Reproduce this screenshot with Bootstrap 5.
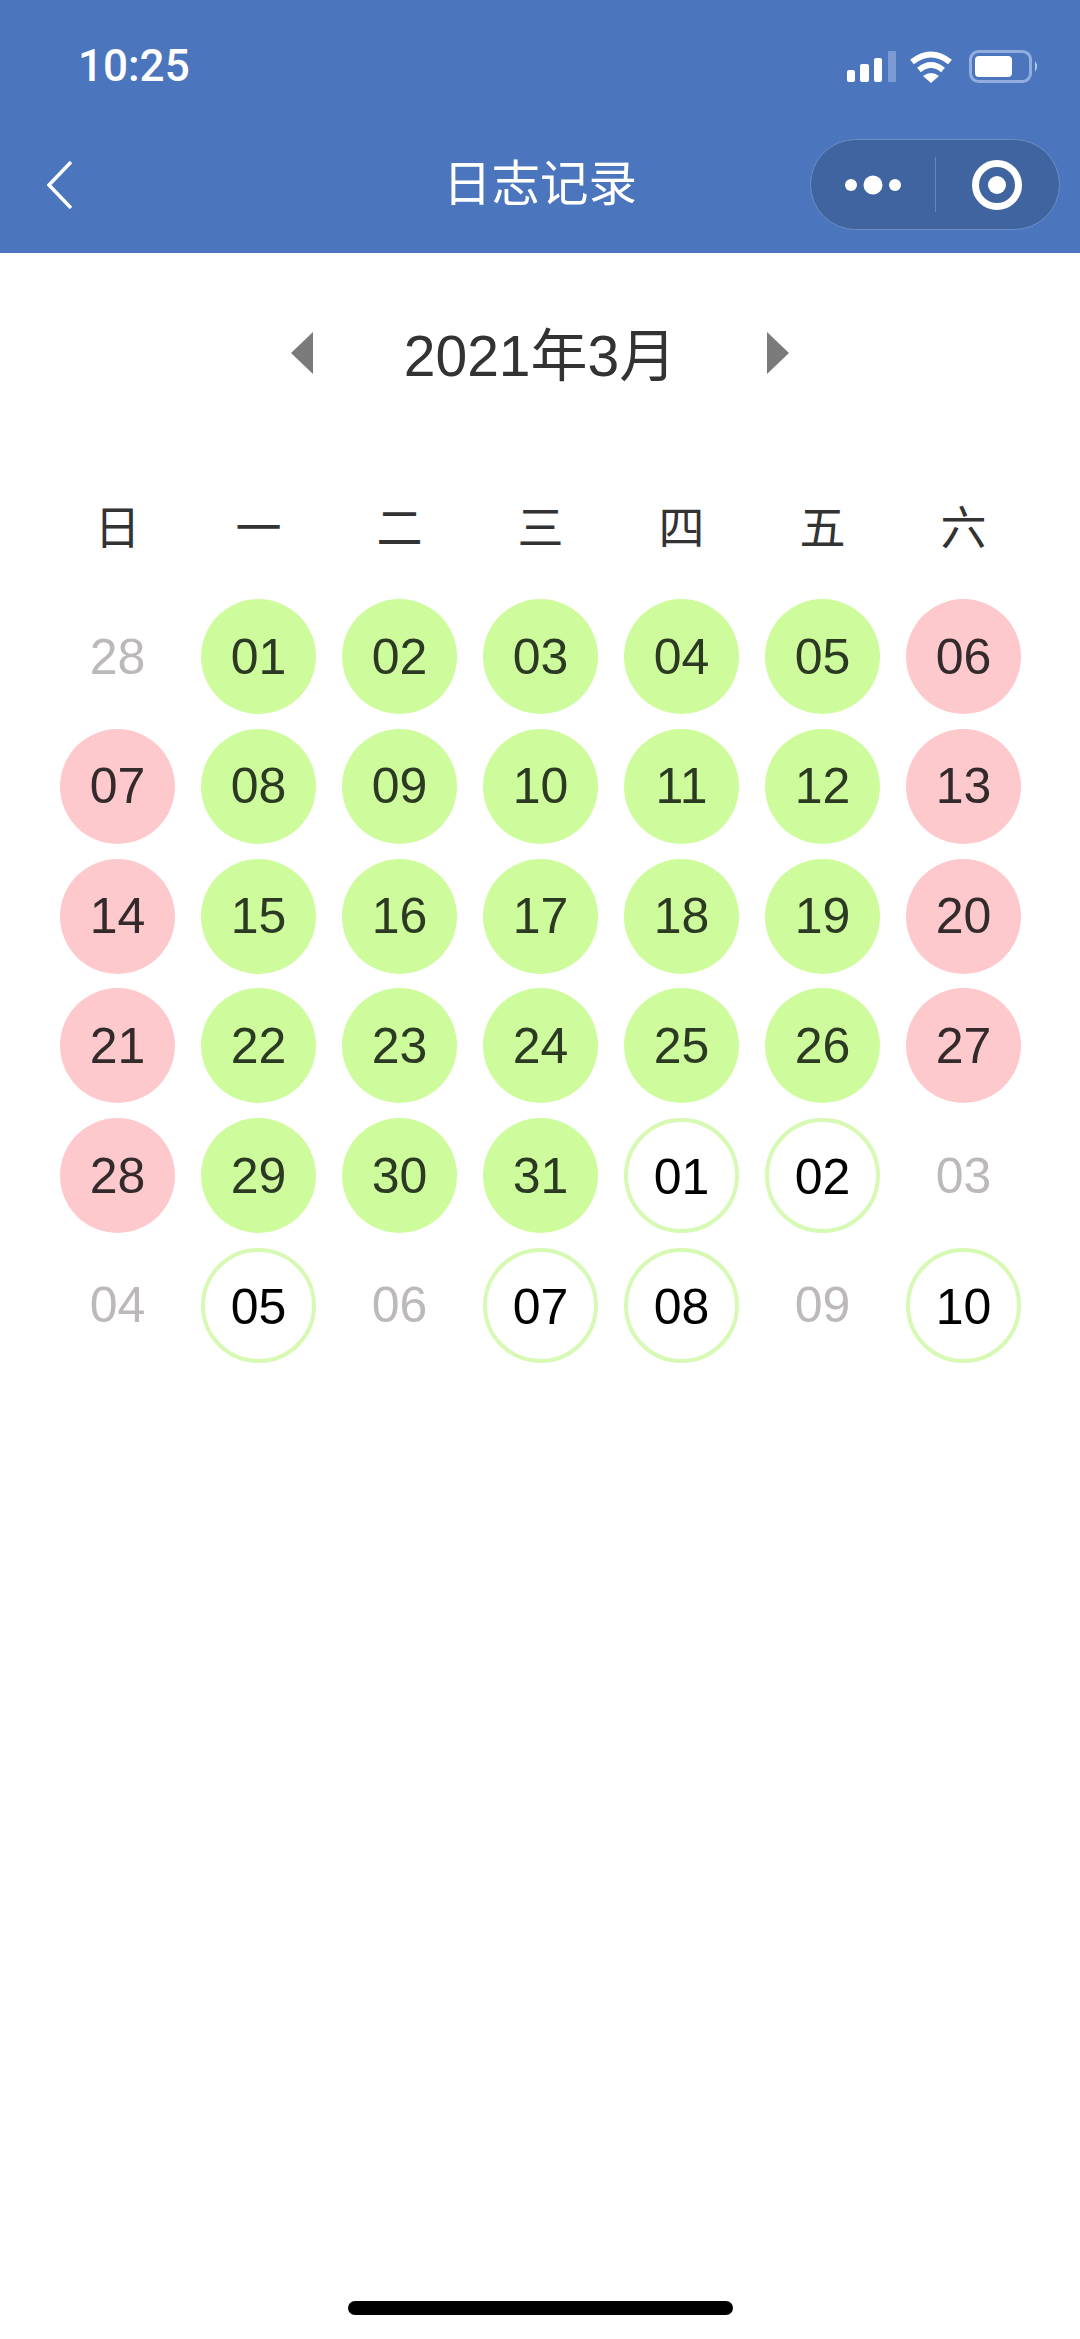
<!DOCTYPE html>
<html lang="zh">
<head>
    <meta charset="utf-8">
    <title>日志记录</title>
    <link href="https://cdn.jsdelivr.net/npm/bootstrap@5.3.3/dist/css/bootstrap.min.css" rel="stylesheet">
    <style>
        body {
            font-family: "Liberation Sans", "Noto Sans CJK SC", sans-serif;
            background: #fff;
            color: #333;
        }
        .page-wrap { min-height: 2339px; }
        .top-head { background: #4b76bd; height: 253px; color: #fff; }
        .status-row { height: 92px; padding: 0 41px 0 81px; }
        .clock { font-family: Roboto, sans-serif; font-weight: 500; font-size: 44px; line-height: 1; margin-top: 44px; margin-left: -3px; }
        .status-icons { margin-top: 50px; }
        .wifi-icon { margin-left: 13px; }
        .title-row { height: 161px; padding: 24px 20px 0 20px; }
        .side-slot { flex: 1 1 0; }
        .back-arrow { margin-left: 27px; }
        .page-title { font-size: 48.5px; line-height: 1; }
        .capsule {
            width: 250px;
            height: 91px;
            background: #3f649f;
            border: 1px solid #6b8ec8;
            border-radius: 46px;
        }
        .capsule-sep { width: 1px; height: 55px; background: #6486bd; }
        .capsule-side { flex: 1 1 0; }
        .month-row { height: 82px; margin-top: 59px; gap: 91px; }
        .month-text { font-size: 57px; line-height: 1; color: #333; padding-top: 6px; }
        .cal-wrap { width: 987px; margin: 0 0 0 47px; }
        .week-row { margin-top: 111px; height: 94px; }
        .week-day { font-size: 46px; line-height: 1; color: #333; text-align: center; }
        .day-row { height: 129.8px; }
        .day-dot {
            width: 115px;
            height: 115px;
            border-radius: 50%;
            font-size: 50px;
            line-height: 1;
            margin: 0 auto;
        }
        .dot-green { background: #cefc9c; color: #2c3a24; }
        .dot-pink { background: #fdc9cc; color: #332a2b; }
        .dot-ring { border: 4px solid #d6f9b3; color: #000; padding-top: 3px; }
        .dot-muted { color: #bdb9bb; }
        .home-bar { width: 385px; height: 14px; background: #000; border-radius: 7px; margin: auto auto 24px; }
    </style>
</head>
<body>
    <div class="page-wrap d-flex flex-column">
        <div class="top-head">
            <div class="status-row d-flex justify-content-between align-items-start">
                <span class="clock">10:25</span>
                <div class="status-icons d-flex align-items-center">
                    <svg width="49" height="32" viewBox="0 0 49 32">
                        <rect x="0" y="19" width="8" height="12" rx="2" fill="#fff"/>
                        <rect x="13" y="13" width="9" height="18" rx="2" fill="#fff"/>
                        <rect x="27" y="7" width="8" height="24" rx="2" fill="#fff"/>
                        <rect x="41" y="0" width="8" height="31" rx="1" fill="#7c9bd4"/>
                    </svg>
                    <svg class="wifi-icon" width="44" height="32" viewBox="0 0 44 32">
                        <path d="M3 11 Q22 -4 41 11" fill="none" stroke="#fff" stroke-width="6"/>
                        <path d="M10 19 Q22 9 34 19" fill="none" stroke="#fff" stroke-width="6"/>
                        <path d="M14 25 Q22 19 30 25 L22 32 Z" fill="#fff"/>
                    </svg>
                    <svg class="ms-3" width="70" height="33" viewBox="0 0 70 33">
                        <rect x="1.5" y="1.5" width="60" height="30" rx="8" fill="none" stroke="#92aee0" stroke-width="3"/>
                        <rect x="6" y="6" width="37" height="21" rx="4" fill="#fff"/>
                        <path d="M66 11 Q70 16 66 22 Z" fill="#b9cdee"/>
                    </svg>
                </div>
            </div>
            <div class="title-row d-flex align-items-center">
                <div class="side-slot d-flex">
                    <svg class="back-arrow" width="26" height="48" viewBox="0 0 26 48">
                        <path d="M24 1 L2 24 L24 47" fill="none" stroke="#fff" stroke-width="3.5"/>
                    </svg>
                </div>
                <div class="page-title">日志记录</div>
                <div class="side-slot d-flex justify-content-end">
                    <div class="capsule d-flex align-items-center">
                        <div class="capsule-side d-flex justify-content-center">
                            <svg width="56" height="20" viewBox="0 0 56 20">
                                <circle cx="6" cy="10" r="6" fill="#fff"/>
                                <circle cx="28" cy="10" r="9.5" fill="#fff"/>
                                <circle cx="50" cy="10" r="6" fill="#fff"/>
                            </svg>
                        </div>
                        <div class="capsule-sep"></div>
                        <div class="capsule-side d-flex justify-content-center">
                            <svg width="50" height="50" viewBox="0 0 50 50">
                                <circle cx="25" cy="25" r="21.5" fill="none" stroke="#fff" stroke-width="7"/>
                                <circle cx="25" cy="25" r="9" fill="#fff"/>
                            </svg>
                        </div>
                    </div>
                </div>
            </div>
        </div>

        <div class="month-row d-flex justify-content-center align-items-center">
            <svg width="22" height="42" viewBox="0 0 22 42"><polygon points="22,0 0,21 22,42" fill="#7a7a7a"/></svg>
            <div class="month-text">2021年3月</div>
            <svg width="22" height="42" viewBox="0 0 22 42"><polygon points="0,0 22,21 0,42" fill="#7a7a7a"/></svg>
        </div>

        <div class="cal-wrap">
            <div class="week-row row g-0">
                <div class="col week-day">日</div>
                <div class="col week-day">一</div>
                <div class="col week-day">二</div>
                <div class="col week-day">三</div>
                <div class="col week-day">四</div>
                <div class="col week-day">五</div>
                <div class="col week-day">六</div>
            </div>
            <div class="day-row row g-0">
                <div class="col"><div class="day-dot dot-muted d-flex align-items-center justify-content-center">28</div></div>
                <div class="col"><div class="day-dot dot-green d-flex align-items-center justify-content-center">01</div></div>
                <div class="col"><div class="day-dot dot-green d-flex align-items-center justify-content-center">02</div></div>
                <div class="col"><div class="day-dot dot-green d-flex align-items-center justify-content-center">03</div></div>
                <div class="col"><div class="day-dot dot-green d-flex align-items-center justify-content-center">04</div></div>
                <div class="col"><div class="day-dot dot-green d-flex align-items-center justify-content-center">05</div></div>
                <div class="col"><div class="day-dot dot-pink d-flex align-items-center justify-content-center">06</div></div>
            </div>
            <div class="day-row row g-0">
                <div class="col"><div class="day-dot dot-pink d-flex align-items-center justify-content-center">07</div></div>
                <div class="col"><div class="day-dot dot-green d-flex align-items-center justify-content-center">08</div></div>
                <div class="col"><div class="day-dot dot-green d-flex align-items-center justify-content-center">09</div></div>
                <div class="col"><div class="day-dot dot-green d-flex align-items-center justify-content-center">10</div></div>
                <div class="col"><div class="day-dot dot-green d-flex align-items-center justify-content-center">11</div></div>
                <div class="col"><div class="day-dot dot-green d-flex align-items-center justify-content-center">12</div></div>
                <div class="col"><div class="day-dot dot-pink d-flex align-items-center justify-content-center">13</div></div>
            </div>
            <div class="day-row row g-0">
                <div class="col"><div class="day-dot dot-pink d-flex align-items-center justify-content-center">14</div></div>
                <div class="col"><div class="day-dot dot-green d-flex align-items-center justify-content-center">15</div></div>
                <div class="col"><div class="day-dot dot-green d-flex align-items-center justify-content-center">16</div></div>
                <div class="col"><div class="day-dot dot-green d-flex align-items-center justify-content-center">17</div></div>
                <div class="col"><div class="day-dot dot-green d-flex align-items-center justify-content-center">18</div></div>
                <div class="col"><div class="day-dot dot-green d-flex align-items-center justify-content-center">19</div></div>
                <div class="col"><div class="day-dot dot-pink d-flex align-items-center justify-content-center">20</div></div>
            </div>
            <div class="day-row row g-0">
                <div class="col"><div class="day-dot dot-pink d-flex align-items-center justify-content-center">21</div></div>
                <div class="col"><div class="day-dot dot-green d-flex align-items-center justify-content-center">22</div></div>
                <div class="col"><div class="day-dot dot-green d-flex align-items-center justify-content-center">23</div></div>
                <div class="col"><div class="day-dot dot-green d-flex align-items-center justify-content-center">24</div></div>
                <div class="col"><div class="day-dot dot-green d-flex align-items-center justify-content-center">25</div></div>
                <div class="col"><div class="day-dot dot-green d-flex align-items-center justify-content-center">26</div></div>
                <div class="col"><div class="day-dot dot-pink d-flex align-items-center justify-content-center">27</div></div>
            </div>
            <div class="day-row row g-0">
                <div class="col"><div class="day-dot dot-pink d-flex align-items-center justify-content-center">28</div></div>
                <div class="col"><div class="day-dot dot-green d-flex align-items-center justify-content-center">29</div></div>
                <div class="col"><div class="day-dot dot-green d-flex align-items-center justify-content-center">30</div></div>
                <div class="col"><div class="day-dot dot-green d-flex align-items-center justify-content-center">31</div></div>
                <div class="col"><div class="day-dot dot-ring d-flex align-items-center justify-content-center">01</div></div>
                <div class="col"><div class="day-dot dot-ring d-flex align-items-center justify-content-center">02</div></div>
                <div class="col"><div class="day-dot dot-muted d-flex align-items-center justify-content-center">03</div></div>
            </div>
            <div class="day-row row g-0">
                <div class="col"><div class="day-dot dot-muted d-flex align-items-center justify-content-center">04</div></div>
                <div class="col"><div class="day-dot dot-ring d-flex align-items-center justify-content-center">05</div></div>
                <div class="col"><div class="day-dot dot-muted d-flex align-items-center justify-content-center">06</div></div>
                <div class="col"><div class="day-dot dot-ring d-flex align-items-center justify-content-center">07</div></div>
                <div class="col"><div class="day-dot dot-ring d-flex align-items-center justify-content-center">08</div></div>
                <div class="col"><div class="day-dot dot-muted d-flex align-items-center justify-content-center">09</div></div>
                <div class="col"><div class="day-dot dot-ring d-flex align-items-center justify-content-center">10</div></div>
            </div>
        </div>

        <div class="home-bar"></div>
    </div>
    <script src="https://cdn.jsdelivr.net/npm/bootstrap@5.3.3/dist/js/bootstrap.bundle.min.js"></script>
</body>
</html>
